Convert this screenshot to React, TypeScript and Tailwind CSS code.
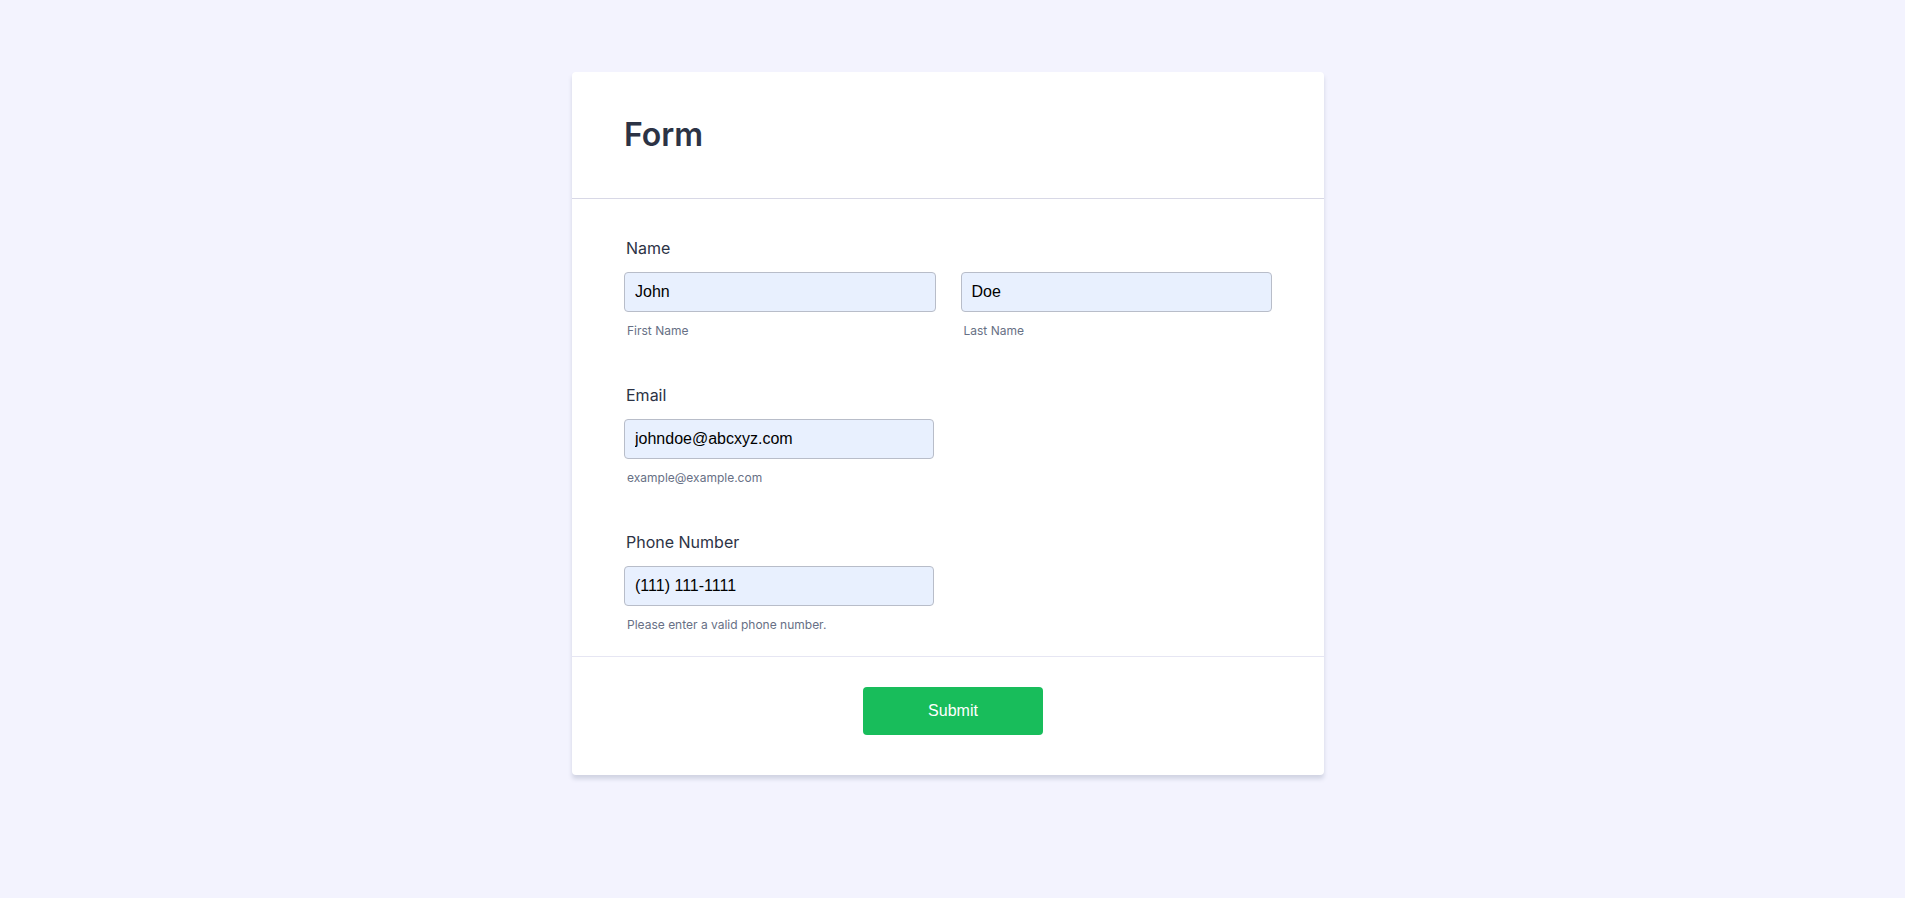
export default function App() {
  const inputCls =
    "h-[40px] w-full rounded-[4px] border border-[#b8bdc9] bg-[#e8f0fe] px-[10px] text-[16px] text-black outline-none [font-family:'Liberation_Sans',Arial,sans-serif]";
  const labelCls = "block pl-[2px] text-[16px] leading-[20px] font-normal text-[#2c3345]";
  const helpCls = "mt-[11px] pl-[3px] text-[12px] leading-[16px] text-[#677085]";

  return (
    <main className="min-h-screen bg-[#f3f3fe] pt-[72px] pb-[123px] [font-family:Inter,'Noto_Sans',sans-serif]">
      <div className="flex justify-center pr-[9px]">
        <div className="w-[752px] rounded-[4px] bg-white shadow-[0_4px_4px_rgba(87,100,126,0.21)]">
          {/* header */}
          <div className="border-b border-[#d8d8e6] px-[52px] py-[43px]">
            <h1 className="text-[32px] leading-[40px] font-semibold text-[#2c3345]">Form</h1>
          </div>

          {/* fields */}
          <div className="flex flex-col gap-[46px] px-[52px] pt-[39px] pb-[23px]">
            <div>
              <label className={labelCls}>Name</label>
              <div className="mt-[14px] grid grid-cols-2 gap-[25px]">
                <div>
                  <input className={inputCls} defaultValue="John" />
                  <div className={helpCls}>First Name</div>
                </div>
                <div>
                  <input className={inputCls} defaultValue="Doe" />
                  <div className={helpCls}>Last Name</div>
                </div>
              </div>
            </div>

            <div>
              <label className={labelCls}>Email</label>
              <div className="mt-[14px] w-[310px]">
                <input className={inputCls} defaultValue="johndoe@abcxyz.com" />
                <div className={helpCls}>example@example.com</div>
              </div>
            </div>

            <div>
              <label className={labelCls}>Phone Number</label>
              <div className="mt-[14px] w-[310px]">
                <input className={inputCls} defaultValue="(111) 111-1111" />
                <div className={helpCls}>Please enter a valid phone number.</div>
              </div>
            </div>
          </div>

          {/* footer */}
          <div className="flex justify-center border-t border-[#e6e6f3] pt-[30px] pb-[40px] pl-[10px]">
            <button
              type="button"
              className="h-[48px] w-[180px] rounded-[4px] bg-[#18bd5b] text-[16px] text-white [font-family:'Liberation_Sans',Arial,sans-serif]"
            >
              Submit
            </button>
          </div>
        </div>
      </div>
    </main>
  );
}
